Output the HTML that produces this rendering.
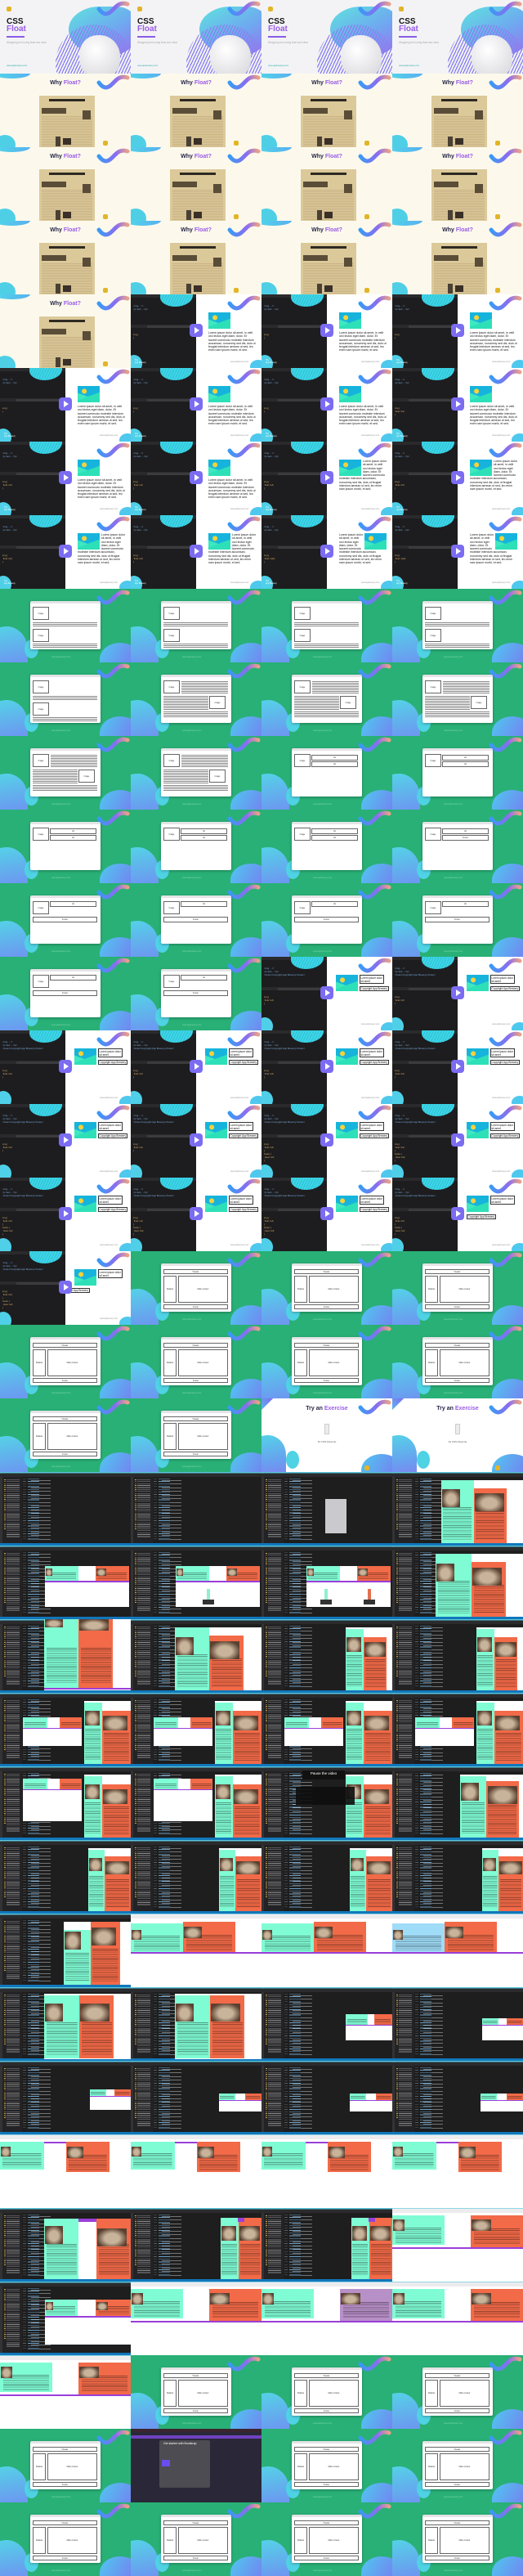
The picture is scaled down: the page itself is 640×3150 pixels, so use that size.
<!DOCTYPE html>
<html><head><meta charset="utf-8"><style>
*{margin:0;padding:0;box-sizing:border-box}
body{width:640px;height:3150px;overflow:hidden;background:#fff;font-family:"Liberation Sans",sans-serif}
.g{display:grid;grid-template-columns:repeat(4,160px);grid-auto-rows:90px}
.c{position:relative;overflow:hidden;width:160px;height:90px}
.c>*{position:absolute;display:block}
.c::before,.c::after{content:"";position:absolute}
.wv{left:118px;top:0;width:42px;height:20px}
.lg{width:6px;height:6px;background:#e2b528;border-radius:2px}
/* title */
.T{background:#f3f3f5}
.T .blb{left:84px;top:8px;width:82px;height:60px;border-radius:48% 30% 40% 55%;background:linear-gradient(150deg,#5ee3df,#6fa8f0 55%,#9a70ee)}
.T .str{left:68px;top:30px;width:95px;height:95px;border-radius:50%;background:repeating-linear-gradient(115deg,transparent 0 2px,#8a80ee 2px 3.3px)}
.T .cld{left:97px;top:43px;width:50px;height:52px;border-radius:45% 50% 40% 45%;background:radial-gradient(circle at 40% 35%,#fff,#d4d4da)}
.h1,.h2{font-size:10px;font-weight:bold;left:8px;line-height:10px}
.h1{top:22px;color:#111}.h2{top:31px;color:#9a5ce8}
.ul{left:8px;top:44px;width:22px;height:2px;background:#8a5ce8}
.sub{left:8px;top:50px;width:55px;font-size:3.2px;line-height:4px;color:#aaa}
.url{left:8px;top:79px;font-size:2.6px;color:#2aaaa8}
/* newspaper */
.N{background:#fcf9ec}
.N::before{left:-8px;top:-6px;width:45px;height:12px;border-radius:50%;background:linear-gradient(90deg,#4fd8e8,#5ab0f0)}
.N::after{left:-7px;top:75px;width:26px;height:24px;border-radius:50%;background:#4fcfe6}
.wf{left:0;width:160px;top:8px;text-align:center;font-size:7px;font-weight:bold;color:#262648}
.wf em,.et em{font-style:normal;color:#9a5ce8}
.np{left:48px;top:27px;width:68px;height:63px;background:linear-gradient(#2e2a22,#2e2a22) 12px 4px/44px 3px no-repeat,linear-gradient(#5a4d38,#5a4d38) 3px 15px/30px 7px no-repeat,linear-gradient(#5a4d38,#5a4d38) 53px 18px/10px 11px no-repeat,linear-gradient(#3a3028,#3a3028) 29px 52px/10px 8px no-repeat,linear-gradient(#4a4034,#4a4034) 20px 50px/6px 12px no-repeat,repeating-linear-gradient(#b49d70 0 .6px,transparent .6px 2px) 3px 25px/62px 37px no-repeat,#dcc99a}
/* D */
.D{background:linear-gradient(#1d1d1f,#1d1d1f) 0 0/80px 100% no-repeat,#fff}
.D::before{left:-6px;top:74px;width:20px;height:22px;border-radius:50%;background:#4fd0e8}
.D::after{left:146px;top:80px;width:20px;height:16px;border-radius:50%;background:#4fc8ee}
.bl{left:36px;top:-10px;width:40px;height:25px;border-radius:40% 50% 60% 50%;background:repeating-linear-gradient(115deg,#3fd6e2 0 2px,#2cc0e0 2px 3px)}
.tab{left:0;top:0;width:80px;height:4px;background:#2a2a2c}
.tab2{left:0;top:37px;width:80px;height:4px;background:#2a2a2c}
.bar{left:20px;top:38px;width:55px;height:3px;background:#3b3b3d}
.cd{left:3px;top:12px;font-size:2.8px;line-height:4px;color:#7aa8d8;white-space:nowrap}
.cd2{left:3px;top:47px;font-size:2.8px;line-height:4px;color:#d8a860;white-space:nowrap}
.pb{left:72px;top:36px;width:16px;height:16px;border-radius:4px;background:#7b6cf2}
.pb::after{content:"";position:absolute;left:6px;top:4px;border-left:6px solid #fff;border-top:4px solid transparent;border-bottom:4px solid transparent}
.pic,.fp,.fr{width:27px;height:20px;background:radial-gradient(circle at 30% 32%,#f5d23a 0 2.8px,transparent 3.2px),linear-gradient(160deg,transparent 58%,#2ee0b8 59%),linear-gradient(20deg,#3ee8c0 38%,transparent 39%),#16b4dc}
.fp{float:left;margin:0 2px 1px 0}.fr{float:right;margin:0 0 1px 2px}
.pic.bk{display:block;position:static;margin-bottom:3px}
.lor{left:95px;top:22px;width:58px;font-size:3.5px;line-height:4.3px;color:#111}
.du{left:122px;top:82px;font-size:2.3px;color:#999}
.b1{left:120px;top:22px;width:30px;height:11px;border:.7px solid #333;font-size:3.2px;line-height:4px;padding:.5px;color:#111}
.b2{top:36px;left:120px;border:.7px solid #333;font-size:3.2px;line-height:4px;padding:0 .5px;white-space:nowrap;color:#111}
.dl{left:5px;top:80px;font-size:2.4px;color:#fff;line-height:2.6px}
/* green */
.G{background:#29b076}
.G::before{left:-30px;top:46px;width:64px;height:72px;border-radius:60% 40% 0 0;background:linear-gradient(170deg,#52d8e6,#6a9cf0 60%,#8f74ee)}
.G::after{left:122px;top:66px;width:50px;height:40px;border-radius:50% 50% 0 0;background:linear-gradient(120deg,#4fc8f0,#7f6cf0)}
.dr{left:30px;top:62px;width:17px;height:23px;border-radius:50%;background:#4fd2e4}
.win{left:37px;top:15px;width:86px;height:59px;background:linear-gradient(#e4e4e6,#e4e4e6) 0 0/100% 3px no-repeat,#fff;border-radius:2px;box-shadow:0 1px 3px rgba(0,0,0,.3)}
.win>*{position:absolute;display:flex;align-items:center;justify-content:center}
.bx{border:.8px solid #666;font-size:2.4px;color:#333;font-style:normal}
.ln{background:repeating-linear-gradient(#8a8a8a 0 .9px,transparent .9px 2px)}
.gu{left:63px;top:82px;font-size:2.4px;color:#7fd8a8}
/* exercise */
.E{background:#fff}
.E::before{left:-25px;top:45px;width:55px;height:60px;border-radius:60% 40% 0 0;background:linear-gradient(170deg,#52d8e6,#6a9cf0 60%,#8f74ee)}
.E::after{left:-10px;top:-10px;width:20px;height:20px;transform:rotate(45deg);background:linear-gradient(#7f6cf0,#5ab8f0)}
.ed{left:30px;top:64px;width:16px;height:22px;border-radius:50%;background:#4fd2e4}
.er{left:122px;top:68px;width:50px;height:40px;border-radius:50% 50% 0 0;background:linear-gradient(120deg,#4fc8f0,#7f6cf0)}
.et{left:0;width:160px;top:9px;text-align:center;font-size:7px;font-weight:bold;color:#262648}
.zip{left:77px;top:31px;width:6px;height:13px;background:#ececec;border:.5px solid #ccc}
.zn{left:0;width:160px;top:51px;text-align:center;font-size:3px;color:#555}
/* vscode */
.V{background:linear-gradient(#5cc6dc,#5cc6dc) 0 0/100% 1.5px no-repeat,linear-gradient(#2b2b2d,#2b2b2d) 0 1.5px/100% 4px no-repeat,linear-gradient(#1177bb,#1177bb) 0 87px/100% 3px no-repeat,linear-gradient(#333336,#333336) 0 0/3px 100% no-repeat,repeating-linear-gradient(#c9a445 0 .8px,transparent .8px 2.4px) 5px 9px/2px 62px no-repeat,repeating-linear-gradient(#8a8a8a 0 .7px,transparent .7px 2.4px) 8px 9px/16px 72px no-repeat,repeating-linear-gradient(#5a5a5a 0 .6px,transparent .6px 3.2px) 28px 8px/4px 76px no-repeat,repeating-linear-gradient(#6aa0c8 0 .7px,transparent .7px 3.2px) 34px 8px/14px 76px no-repeat,repeating-linear-gradient(#c8c8c8 0 .7px,transparent .7px 4.5px) 38px 10px/24px 74px no-repeat,linear-gradient(#232325,#232325) 3px 0/24px 100% no-repeat,#1e1e1e}
.W{background:linear-gradient(#8fd6e4,#8fd6e4) 0 0/100% 1px no-repeat,linear-gradient(#ececef,#ececef) 0 1px/100% 5px no-repeat,#fff}
.mi{background:repeating-linear-gradient(rgba(0,0,0,.38) 0 .8px,transparent .8px 2.2px) 50% 88%/88% 52% no-repeat,#80fcd4}
.rd{background:repeating-linear-gradient(rgba(0,0,0,.38) 0 .8px,transparent .8px 2.2px) 50% 88%/88% 52% no-repeat,#f26a48}
.wh{background:#fff}.pu{background:#9a3fd8}
.ph{background:radial-gradient(ellipse at 50% 55%,#c8b49a 0 35%,#5a4030 75%)}
.pv{left:50px;top:6px;width:52px;text-align:center;font-size:4.5px;color:#fff}
.B{background:#2a2838}
.B>i{display:block}
.bti{left:40px;top:16px;font-size:3.5px;color:#fff}
</style></head><body>
<svg width="0" height="0" style="position:absolute"><defs><linearGradient id="wg" x1="0" x2="1"><stop offset="0" stop-color="#3a9af5"/><stop offset=".6" stop-color="#8b6cf0"/><stop offset="1" stop-color="#e8a08a"/></linearGradient><path id="wp" d="M3 11 C8 18 13 19 19 13 S29 2 38 5" fill="none" stroke="url(#wg)" stroke-width="5" stroke-linecap="round"/></defs></svg>
<div class="g">
<!-- r0 -->
<div class="c T"><i class="blb"></i><i class="str"></i><i class="cld"></i><svg class="wv"><use href="#wp"/></svg><i class="lg" style="left:8px;top:8px"></i><b class="h1">CSS</b><b class="h2">Float</b><i class="ul"></i><span class="sub">Wrapping text using float and clear</span><span class="url">www.appbrewery.com</span></div>
<div class="c T"><i class="blb"></i><i class="str"></i><i class="cld"></i><svg class="wv"><use href="#wp"/></svg><i class="lg" style="left:8px;top:8px"></i><b class="h1">CSS</b><b class="h2">Float</b><i class="ul"></i><span class="sub">Wrapping text using float and clear</span><span class="url">www.appbrewery.com</span></div>
<div class="c T"><i class="blb"></i><i class="str"></i><i class="cld"></i><svg class="wv"><use href="#wp"/></svg><i class="lg" style="left:8px;top:8px"></i><b class="h1">CSS</b><b class="h2">Float</b><i class="ul"></i><span class="sub">Wrapping text using float and clear</span><span class="url">www.appbrewery.com</span></div>
<div class="c T"><i class="blb"></i><i class="str"></i><i class="cld"></i><svg class="wv"><use href="#wp"/></svg><i class="lg" style="left:8px;top:8px"></i><b class="h1">CSS</b><b class="h2">Float</b><i class="ul"></i><span class="sub">Wrapping text using float and clear</span><span class="url">www.appbrewery.com</span></div>
<!-- r1-r3 newspaper -->
<div class="c N"><svg class="wv"><use href="#wp"/></svg><b class="wf">Why <em>Float?</em></b><i class="np"></i><i class="lg" style="left:126px;top:82px"></i></div>
<div class="c N"><svg class="wv"><use href="#wp"/></svg><b class="wf">Why <em>Float?</em></b><i class="np"></i><i class="lg" style="left:126px;top:82px"></i></div>
<div class="c N"><svg class="wv"><use href="#wp"/></svg><b class="wf">Why <em>Float?</em></b><i class="np"></i><i class="lg" style="left:126px;top:82px"></i></div>
<div class="c N"><svg class="wv"><use href="#wp"/></svg><b class="wf">Why <em>Float?</em></b><i class="np"></i><i class="lg" style="left:126px;top:82px"></i></div>
<div class="c N"><svg class="wv"><use href="#wp"/></svg><b class="wf">Why <em>Float?</em></b><i class="np"></i><i class="lg" style="left:126px;top:82px"></i></div>
<div class="c N"><svg class="wv"><use href="#wp"/></svg><b class="wf">Why <em>Float?</em></b><i class="np"></i><i class="lg" style="left:126px;top:82px"></i></div>
<div class="c N"><svg class="wv"><use href="#wp"/></svg><b class="wf">Why <em>Float?</em></b><i class="np"></i><i class="lg" style="left:126px;top:82px"></i></div>
<div class="c N"><svg class="wv"><use href="#wp"/></svg><b class="wf">Why <em>Float?</em></b><i class="np"></i><i class="lg" style="left:126px;top:82px"></i></div>
<div class="c N"><svg class="wv"><use href="#wp"/></svg><b class="wf">Why <em>Float?</em></b><i class="np"></i><i class="lg" style="left:126px;top:82px"></i></div>
<div class="c N"><svg class="wv"><use href="#wp"/></svg><b class="wf">Why <em>Float?</em></b><i class="np"></i><i class="lg" style="left:126px;top:82px"></i></div>
<div class="c N"><svg class="wv"><use href="#wp"/></svg><b class="wf">Why <em>Float?</em></b><i class="np"></i><i class="lg" style="left:126px;top:82px"></i></div>
<div class="c N"><svg class="wv"><use href="#wp"/></svg><b class="wf">Why <em>Float?</em></b><i class="np"></i><i class="lg" style="left:126px;top:82px"></i></div>
<!-- r4 -->
<div class="c N"><svg class="wv"><use href="#wp"/></svg><b class="wf">Why <em>Float?</em></b><i class="np"></i><i class="lg" style="left:126px;top:82px"></i></div>
<div class="c D"><i class="tab"></i><i class="tab2"></i><i class="bl"></i><span class="cd">&lt;img ... /&gt;<br>&lt;p&gt;text... &lt;/p&gt;</span><i class="bar"></i><span class="cd2">img {<br>}</span><div class="lor"><i class="pic bk"></i>Lorem ipsum dolor sit amet, in velit orci lectus eget diam, dolor. Et laoreet commodo molestie interdum accumsan, nonummy sed dis, duis ut feugiat interdum aenean ut sed, leo enim nam ipsum morbi, et sed.</div><i class="pb"></i><svg class="wv"><use href="#wp"/></svg><span class="du">www.appbrewery.com</span><span class="dl">The<br>App Brewery</span></div>
<div class="c D"><i class="tab"></i><i class="tab2"></i><i class="bl"></i><span class="cd">&lt;img ... /&gt;<br>&lt;p&gt;text... &lt;/p&gt;</span><i class="bar"></i><span class="cd2">img {<br>}</span><div class="lor"><i class="pic bk"></i>Lorem ipsum dolor sit amet, in velit orci lectus eget diam, dolor. Et laoreet commodo molestie interdum accumsan, nonummy sed dis, duis ut feugiat interdum aenean ut sed, leo enim nam ipsum morbi, et sed.</div><i class="pb"></i><svg class="wv"><use href="#wp"/></svg><span class="du">www.appbrewery.com</span><span class="dl">The<br>App Brewery</span></div>
<div class="c D"><i class="tab"></i><i class="tab2"></i><i class="bl"></i><span class="cd">&lt;img ... /&gt;<br>&lt;p&gt;text... &lt;/p&gt;</span><i class="bar"></i><span class="cd2">img {<br>}</span><div class="lor"><i class="pic bk"></i>Lorem ipsum dolor sit amet, in velit orci lectus eget diam, dolor. Et laoreet commodo molestie interdum accumsan, nonummy sed dis, duis ut feugiat interdum aenean ut sed, leo enim nam ipsum morbi, et sed.</div><i class="pb"></i><svg class="wv"><use href="#wp"/></svg><span class="du">www.appbrewery.com</span><span class="dl">The<br>App Brewery</span></div>
<!-- r5 -->
<div class="c D"><i class="tab"></i><i class="tab2"></i><i class="bl"></i><span class="cd">&lt;img ... /&gt;<br>&lt;p&gt;text... &lt;/p&gt;</span><i class="bar"></i><span class="cd2">img {<br>}</span><div class="lor"><i class="pic bk"></i>Lorem ipsum dolor sit amet, in velit orci lectus eget diam, dolor. Et laoreet commodo molestie interdum accumsan, nonummy sed dis, duis ut feugiat interdum aenean ut sed, leo enim nam ipsum morbi, et sed.</div><i class="pb"></i><svg class="wv"><use href="#wp"/></svg><span class="du">www.appbrewery.com</span><span class="dl">The<br>App Brewery</span></div>
<div class="c D"><i class="tab"></i><i class="tab2"></i><i class="bl"></i><span class="cd">&lt;img ... /&gt;<br>&lt;p&gt;text... &lt;/p&gt;</span><i class="bar"></i><span class="cd2">img {<br>}</span><div class="lor"><i class="pic bk"></i>Lorem ipsum dolor sit amet, in velit orci lectus eget diam, dolor. Et laoreet commodo molestie interdum accumsan, nonummy sed dis, duis ut feugiat interdum aenean ut sed, leo enim nam ipsum morbi, et sed.</div><i class="pb"></i><svg class="wv"><use href="#wp"/></svg><span class="du">www.appbrewery.com</span><span class="dl">The<br>App Brewery</span></div>
<div class="c D"><i class="tab"></i><i class="tab2"></i><i class="bl"></i><span class="cd">&lt;img ... /&gt;<br>&lt;p&gt;text... &lt;/p&gt;</span><i class="bar"></i><span class="cd2">img {<br>}</span><div class="lor"><i class="pic bk"></i>Lorem ipsum dolor sit amet, in velit orci lectus eget diam, dolor. Et laoreet commodo molestie interdum accumsan, nonummy sed dis, duis ut feugiat interdum aenean ut sed, leo enim nam ipsum morbi, et sed.</div><i class="pb"></i><svg class="wv"><use href="#wp"/></svg><span class="du">www.appbrewery.com</span><span class="dl">The<br>App Brewery</span></div>
<div class="c D"><i class="tab"></i><i class="tab2"></i><i class="bl"></i><span class="cd">&lt;img ... /&gt;<br>&lt;p&gt;text... &lt;/p&gt;</span><i class="bar"></i><span class="cd2">img {<br>&nbsp;float: left;<br>}</span><div class="lor"><i class="pic bk"></i>Lorem ipsum dolor sit amet, in velit orci lectus eget diam, dolor. Et laoreet commodo molestie interdum accumsan, nonummy sed dis, duis ut feugiat interdum aenean ut sed, leo enim nam ipsum morbi, et sed.</div><i class="pb"></i><svg class="wv"><use href="#wp"/></svg><span class="du">www.appbrewery.com</span><span class="dl">The<br>App Brewery</span></div>
<!-- r6 -->
<div class="c D"><i class="tab"></i><i class="tab2"></i><i class="bl"></i><span class="cd">&lt;img ... /&gt;<br>&lt;p&gt;text... &lt;/p&gt;</span><i class="bar"></i><span class="cd2">img {<br>&nbsp;float: left;<br>}</span><div class="lor"><i class="pic bk"></i>Lorem ipsum dolor sit amet, in velit orci lectus eget diam, dolor. Et laoreet commodo molestie interdum accumsan, nonummy sed dis, duis ut feugiat interdum aenean ut sed, leo enim nam ipsum morbi, et sed.</div><i class="pb"></i><svg class="wv"><use href="#wp"/></svg><span class="du">www.appbrewery.com</span><span class="dl">The<br>App Brewery</span></div>
<div class="c D"><i class="tab"></i><i class="tab2"></i><i class="bl"></i><span class="cd">&lt;img ... /&gt;<br>&lt;p&gt;text... &lt;/p&gt;</span><i class="bar"></i><span class="cd2">img {<br>&nbsp;float: left;<br>}</span><div class="lor"><i class="pic bk"></i>Lorem ipsum dolor sit amet, in velit orci lectus eget diam, dolor. Et laoreet commodo molestie interdum accumsan, nonummy sed dis, duis ut feugiat interdum aenean ut sed, leo enim nam ipsum morbi, et sed.</div><i class="pb"></i><svg class="wv"><use href="#wp"/></svg><span class="du">www.appbrewery.com</span><span class="dl">The<br>App Brewery</span></div>
<div class="c D"><i class="tab"></i><i class="tab2"></i><i class="bl"></i><span class="cd">&lt;img ... /&gt;<br>&lt;p&gt;text... &lt;/p&gt;</span><i class="bar"></i><span class="cd2">img {<br>&nbsp;float: left;<br>}</span><div class="lor"><i class="fp"></i>Lorem ipsum dolor sit amet, in velit orci lectus eget diam, dolor. Et laoreet commodo molestie interdum accumsan, nonummy sed dis, duis ut feugiat interdum aenean ut sed, leo enim nam ipsum morbi, et sed.</div><i class="pb"></i><svg class="wv"><use href="#wp"/></svg><span class="du">www.appbrewery.com</span><span class="dl">The<br>App Brewery</span></div>
<div class="c D"><i class="tab"></i><i class="tab2"></i><i class="bl"></i><span class="cd">&lt;img ... /&gt;<br>&lt;p&gt;text... &lt;/p&gt;</span><i class="bar"></i><span class="cd2">img {<br>&nbsp;float: left;<br>}</span><div class="lor"><i class="fp"></i>Lorem ipsum dolor sit amet, in velit orci lectus eget diam, dolor. Et laoreet commodo molestie interdum accumsan, nonummy sed dis, duis ut feugiat interdum aenean ut sed, leo enim nam ipsum morbi, et sed.</div><i class="pb"></i><svg class="wv"><use href="#wp"/></svg><span class="du">www.appbrewery.com</span><span class="dl">The<br>App Brewery</span></div>
<!-- r7 -->
<div class="c D"><i class="tab"></i><i class="tab2"></i><i class="bl"></i><span class="cd">&lt;img ... /&gt;<br>&lt;p&gt;text... &lt;/p&gt;</span><i class="bar"></i><span class="cd2">img {<br>&nbsp;float: left;<br>}</span><div class="lor"><i class="fp"></i>Lorem ipsum dolor sit amet, in velit orci lectus eget diam, dolor. Et laoreet commodo molestie interdum accumsan, nonummy sed dis, duis ut feugiat interdum aenean ut sed, leo enim nam ipsum morbi, et sed.</div><i class="pb"></i><svg class="wv"><use href="#wp"/></svg><span class="du">www.appbrewery.com</span><span class="dl">The<br>App Brewery</span></div>
<div class="c D"><i class="tab"></i><i class="tab2"></i><i class="bl"></i><span class="cd">&lt;img ... /&gt;<br>&lt;p&gt;text... &lt;/p&gt;</span><i class="bar"></i><span class="cd2">img {<br>&nbsp;float: left;<br>}</span><div class="lor"><i class="fp"></i>Lorem ipsum dolor sit amet, in velit orci lectus eget diam, dolor. Et laoreet commodo molestie interdum accumsan, nonummy sed dis, duis ut feugiat interdum aenean ut sed, leo enim nam ipsum morbi, et sed.</div><i class="pb"></i><svg class="wv"><use href="#wp"/></svg><span class="du">www.appbrewery.com</span><span class="dl">The<br>App Brewery</span></div>
<div class="c D"><i class="tab"></i><i class="tab2"></i><i class="bl"></i><span class="cd">&lt;img ... /&gt;<br>&lt;p&gt;text... &lt;/p&gt;</span><i class="bar"></i><span class="cd2">img {<br>&nbsp;float: right;<br>}</span><div class="lor"><i class="fr"></i>Lorem ipsum dolor sit amet, in velit orci lectus eget diam, dolor. Et laoreet commodo molestie interdum accumsan, nonummy sed dis, duis ut feugiat interdum aenean ut sed, leo enim nam ipsum morbi, et sed.</div><i class="pb"></i><svg class="wv"><use href="#wp"/></svg><span class="du">www.appbrewery.com</span><span class="dl">The<br>App Brewery</span></div>
<div class="c D"><i class="tab"></i><i class="tab2"></i><i class="bl"></i><span class="cd">&lt;img ... /&gt;<br>&lt;p&gt;text... &lt;/p&gt;</span><i class="bar"></i><span class="cd2">img {<br>&nbsp;float: right;<br>}</span><div class="lor"><i class="fr"></i>Lorem ipsum dolor sit amet, in velit orci lectus eget diam, dolor. Et laoreet commodo molestie interdum accumsan, nonummy sed dis, duis ut feugiat interdum aenean ut sed, leo enim nam ipsum morbi, et sed.</div><i class="pb"></i><svg class="wv"><use href="#wp"/></svg><span class="du">www.appbrewery.com</span><span class="dl">The<br>App Brewery</span></div>
<!-- r8 G1 -->
<div class="c G"><i class="dr"></i><svg class="wv"><use href="#wp"/></svg><div class="win"><i class="bx" style="left:3px;top:7px;width:20px;height:16px">Image</i><i class="ln" style="left:3px;top:26px;width:79px;height:6px"></i><i class="bx" style="left:3px;top:34px;width:20px;height:16px">Image</i><i class="ln" style="left:3px;top:52px;width:79px;height:6px"></i></div><i class="lg" style="left:127px;top:82px"></i><span class="gu">www.appbrewery.com</span></div>
<div class="c G"><i class="dr"></i><svg class="wv"><use href="#wp"/></svg><div class="win"><i class="bx" style="left:3px;top:7px;width:20px;height:16px">Image</i><i class="ln" style="left:3px;top:26px;width:79px;height:6px"></i><i class="bx" style="left:3px;top:34px;width:20px;height:16px">Image</i><i class="ln" style="left:3px;top:52px;width:79px;height:6px"></i></div><i class="lg" style="left:127px;top:82px"></i><span class="gu">www.appbrewery.com</span></div>
<div class="c G"><i class="dr"></i><svg class="wv"><use href="#wp"/></svg><div class="win"><i class="bx" style="left:3px;top:7px;width:20px;height:16px">Image</i><i class="ln" style="left:3px;top:26px;width:79px;height:6px"></i><i class="bx" style="left:3px;top:34px;width:20px;height:16px">Image</i><i class="ln" style="left:3px;top:52px;width:79px;height:6px"></i></div><i class="lg" style="left:127px;top:82px"></i><span class="gu">www.appbrewery.com</span></div>
<div class="c G"><i class="dr"></i><svg class="wv"><use href="#wp"/></svg><div class="win"><i class="bx" style="left:3px;top:7px;width:20px;height:16px">Image</i><i class="ln" style="left:3px;top:26px;width:79px;height:6px"></i><i class="bx" style="left:3px;top:34px;width:20px;height:16px">Image</i><i class="ln" style="left:3px;top:52px;width:79px;height:6px"></i></div><i class="lg" style="left:127px;top:82px"></i><span class="gu">www.appbrewery.com</span></div>
<!-- r9 -->
<div class="c G"><i class="dr"></i><svg class="wv"><use href="#wp"/></svg><div class="win"><i class="bx" style="left:3px;top:7px;width:20px;height:16px">Image</i><i class="ln" style="left:3px;top:26px;width:79px;height:6px"></i><i class="bx" style="left:3px;top:34px;width:20px;height:16px">Image</i><i class="ln" style="left:3px;top:52px;width:79px;height:6px"></i></div><i class="lg" style="left:127px;top:82px"></i><span class="gu">www.appbrewery.com</span></div>
<div class="c G"><i class="dr"></i><svg class="wv"><use href="#wp"/></svg><div class="win"><i class="bx" style="left:3px;top:7px;width:20px;height:16px">Image</i><i class="ln" style="left:25px;top:8px;width:57px;height:16px"></i><i class="ln" style="left:3px;top:26px;width:55px;height:18px"></i><i class="bx" style="left:59px;top:26px;width:20px;height:16px">Image</i><i class="ln" style="left:3px;top:45px;width:79px;height:8px"></i></div><i class="lg" style="left:127px;top:82px"></i><span class="gu">www.appbrewery.com</span></div>
<div class="c G"><i class="dr"></i><svg class="wv"><use href="#wp"/></svg><div class="win"><i class="bx" style="left:3px;top:7px;width:20px;height:16px">Image</i><i class="ln" style="left:25px;top:8px;width:57px;height:16px"></i><i class="ln" style="left:3px;top:26px;width:55px;height:18px"></i><i class="bx" style="left:59px;top:26px;width:20px;height:16px">Image</i><i class="ln" style="left:3px;top:45px;width:79px;height:8px"></i></div><i class="lg" style="left:127px;top:82px"></i><span class="gu">www.appbrewery.com</span></div>
<div class="c G"><i class="dr"></i><svg class="wv"><use href="#wp"/></svg><div class="win"><i class="bx" style="left:3px;top:7px;width:20px;height:16px">Image</i><i class="ln" style="left:25px;top:8px;width:57px;height:16px"></i><i class="ln" style="left:3px;top:26px;width:55px;height:18px"></i><i class="bx" style="left:59px;top:26px;width:20px;height:16px">Image</i><i class="ln" style="left:3px;top:45px;width:79px;height:8px"></i></div><i class="lg" style="left:127px;top:82px"></i><span class="gu">www.appbrewery.com</span></div>
<!-- r10 -->
<div class="c G"><i class="dr"></i><svg class="wv"><use href="#wp"/></svg><div class="win"><i class="bx" style="left:3px;top:7px;width:20px;height:16px">Image</i><i class="ln" style="left:25px;top:8px;width:57px;height:16px"></i><i class="ln" style="left:3px;top:26px;width:55px;height:18px"></i><i class="bx" style="left:59px;top:26px;width:20px;height:16px">Image</i><i class="ln" style="left:3px;top:45px;width:79px;height:8px"></i></div><i class="lg" style="left:127px;top:82px"></i><span class="gu">www.appbrewery.com</span></div>
<div class="c G"><i class="dr"></i><svg class="wv"><use href="#wp"/></svg><div class="win"><i class="bx" style="left:3px;top:7px;width:20px;height:16px">Image</i><i class="ln" style="left:25px;top:8px;width:57px;height:16px"></i><i class="ln" style="left:3px;top:26px;width:55px;height:18px"></i><i class="bx" style="left:59px;top:26px;width:20px;height:16px">Image</i><i class="ln" style="left:3px;top:45px;width:79px;height:8px"></i></div><i class="lg" style="left:127px;top:82px"></i><span class="gu">www.appbrewery.com</span></div>
<div class="c G"><i class="dr"></i><svg class="wv"><use href="#wp"/></svg><div class="win"><i class="bx" style="left:3px;top:7px;width:20px;height:16px">Image</i><i class="bx" style="left:24px;top:8px;width:57px;height:7px">div</i><i class="bx" style="left:24px;top:16px;width:57px;height:7px">div</i></div><i class="lg" style="left:127px;top:82px"></i><span class="gu">www.appbrewery.com</span></div>
<div class="c G"><i class="dr"></i><svg class="wv"><use href="#wp"/></svg><div class="win"><i class="bx" style="left:3px;top:7px;width:20px;height:16px">Image</i><i class="bx" style="left:24px;top:8px;width:57px;height:7px">div</i><i class="bx" style="left:24px;top:16px;width:57px;height:7px">div</i></div><i class="lg" style="left:127px;top:82px"></i><span class="gu">www.appbrewery.com</span></div>
<!-- r11 -->
<div class="c G"><i class="dr"></i><svg class="wv"><use href="#wp"/></svg><div class="win"><i class="bx" style="left:3px;top:7px;width:20px;height:16px">Image</i><i class="bx" style="left:24px;top:8px;width:57px;height:7px">div</i><i class="bx" style="left:24px;top:16px;width:57px;height:7px">div</i></div><i class="lg" style="left:127px;top:82px"></i><span class="gu">www.appbrewery.com</span></div>
<div class="c G"><i class="dr"></i><svg class="wv"><use href="#wp"/></svg><div class="win"><i class="bx" style="left:3px;top:7px;width:20px;height:16px">Image</i><i class="bx" style="left:24px;top:8px;width:57px;height:7px">div</i><i class="bx" style="left:24px;top:16px;width:57px;height:7px">div</i></div><i class="lg" style="left:127px;top:82px"></i><span class="gu">www.appbrewery.com</span></div>
<div class="c G"><i class="dr"></i><svg class="wv"><use href="#wp"/></svg><div class="win"><i class="bx" style="left:3px;top:7px;width:20px;height:16px">Image</i><i class="bx" style="left:24px;top:8px;width:57px;height:7px">div</i><i class="bx" style="left:24px;top:16px;width:57px;height:7px">div</i></div><i class="lg" style="left:127px;top:82px"></i><span class="gu">www.appbrewery.com</span></div>
<div class="c G"><i class="dr"></i><svg class="wv"><use href="#wp"/></svg><div class="win"><i class="bx" style="left:3px;top:7px;width:20px;height:16px">Image</i><i class="bx" style="left:24px;top:8px;width:57px;height:7px">div</i><i class="bx" style="left:24px;top:16px;width:57px;height:7px">Footer</i></div><i class="lg" style="left:127px;top:82px"></i><span class="gu">www.appbrewery.com</span></div>
<!-- r12 -->
<div class="c G"><i class="dr"></i><svg class="wv"><use href="#wp"/></svg><div class="win"><i class="bx" style="left:3px;top:7px;width:20px;height:16px">Image</i><i class="bx" style="left:24px;top:7px;width:57px;height:7px">div</i><i class="bx" style="left:3px;top:26px;width:79px;height:7px">Footer</i></div><i class="lg" style="left:127px;top:82px"></i><span class="gu">www.appbrewery.com</span></div>
<div class="c G"><i class="dr"></i><svg class="wv"><use href="#wp"/></svg><div class="win"><i class="bx" style="left:3px;top:7px;width:20px;height:16px">Image</i><i class="bx" style="left:24px;top:7px;width:57px;height:7px">div</i><i class="bx" style="left:3px;top:26px;width:79px;height:7px">Footer</i></div><i class="lg" style="left:127px;top:82px"></i><span class="gu">www.appbrewery.com</span></div>
<div class="c G"><i class="dr"></i><svg class="wv"><use href="#wp"/></svg><div class="win"><i class="bx" style="left:3px;top:7px;width:20px;height:16px">Image</i><i class="bx" style="left:24px;top:7px;width:57px;height:7px">div</i><i class="bx" style="left:3px;top:26px;width:79px;height:7px">Footer</i></div><i class="lg" style="left:127px;top:82px"></i><span class="gu">www.appbrewery.com</span></div>
<div class="c G"><i class="dr"></i><svg class="wv"><use href="#wp"/></svg><div class="win"><i class="bx" style="left:3px;top:7px;width:20px;height:16px">Image</i><i class="bx" style="left:24px;top:7px;width:57px;height:7px">div</i><i class="bx" style="left:3px;top:26px;width:79px;height:7px">Footer</i></div><i class="lg" style="left:127px;top:82px"></i><span class="gu">www.appbrewery.com</span></div>
<!-- r13 -->
<div class="c G"><i class="dr"></i><svg class="wv"><use href="#wp"/></svg><div class="win"><i class="bx" style="left:3px;top:7px;width:20px;height:16px">Image</i><i class="bx" style="left:24px;top:7px;width:57px;height:7px">div</i><i class="bx" style="left:3px;top:26px;width:79px;height:7px">Footer</i></div><i class="lg" style="left:127px;top:82px"></i><span class="gu">www.appbrewery.com</span></div>
<div class="c G"><i class="dr"></i><svg class="wv"><use href="#wp"/></svg><div class="win"><i class="bx" style="left:3px;top:7px;width:20px;height:16px">Image</i><i class="bx" style="left:24px;top:7px;width:57px;height:7px">div</i><i class="bx" style="left:3px;top:26px;width:79px;height:7px">Footer</i></div><i class="lg" style="left:127px;top:82px"></i><span class="gu">www.appbrewery.com</span></div>
<div class="c D"><i class="tab"></i><i class="tab2"></i><i class="bl"></i><span class="cd">&lt;img ... /&gt;<br>&lt;p&gt;text... &lt;/p&gt;<br>&lt;footer&gt;Copyright App Brewery&lt;/footer&gt;</span><i class="bar"></i><span class="cd2">img {<br>&nbsp;float: left;<br>}</span><i class="pic" style="left:91px;top:22px"></i><span class="b1">Lorem ipsum dolor sit amet.</span><span class="b2">Copyright App Brewery</span><i class="pb"></i><svg class="wv"><use href="#wp"/></svg><span class="du">www.appbrewery.com</span></div>
<div class="c D"><i class="tab"></i><i class="tab2"></i><i class="bl"></i><span class="cd">&lt;img ... /&gt;<br>&lt;p&gt;text... &lt;/p&gt;<br>&lt;footer&gt;Copyright App Brewery&lt;/footer&gt;</span><i class="bar"></i><span class="cd2">img {<br>&nbsp;float: left;<br>}</span><i class="pic" style="left:91px;top:22px"></i><span class="b1">Lorem ipsum dolor sit amet.</span><span class="b2">Copyright App Brewery</span><i class="pb"></i><svg class="wv"><use href="#wp"/></svg><span class="du">www.appbrewery.com</span></div>
<!-- r14 -->
<div class="c D"><i class="tab"></i><i class="tab2"></i><i class="bl"></i><span class="cd">&lt;img ... /&gt;<br>&lt;p&gt;text... &lt;/p&gt;<br>&lt;footer&gt;Copyright App Brewery&lt;/footer&gt;</span><i class="bar"></i><span class="cd2">img {<br>&nbsp;float: left;<br>}</span><i class="pic" style="left:91px;top:22px"></i><span class="b1">Lorem ipsum dolor sit amet.</span><span class="b2">Copyright App Brewery</span><i class="pb"></i><svg class="wv"><use href="#wp"/></svg><span class="du">www.appbrewery.com</span></div>
<div class="c D"><i class="tab"></i><i class="tab2"></i><i class="bl"></i><span class="cd">&lt;img ... /&gt;<br>&lt;p&gt;text... &lt;/p&gt;<br>&lt;footer&gt;Copyright App Brewery&lt;/footer&gt;</span><i class="bar"></i><span class="cd2">img {<br>&nbsp;float: left;<br>}</span><i class="pic" style="left:91px;top:22px"></i><span class="b1">Lorem ipsum dolor sit amet.</span><span class="b2">Copyright App Brewery</span><i class="pb"></i><svg class="wv"><use href="#wp"/></svg><span class="du">www.appbrewery.com</span></div>
<div class="c D"><i class="tab"></i><i class="tab2"></i><i class="bl"></i><span class="cd">&lt;img ... /&gt;<br>&lt;p&gt;text... &lt;/p&gt;<br>&lt;footer&gt;Copyright App Brewery&lt;/footer&gt;</span><i class="bar"></i><span class="cd2">img {<br>&nbsp;float: left;<br>}</span><i class="pic" style="left:91px;top:22px"></i><span class="b1">Lorem ipsum dolor sit amet.</span><span class="b2">Copyright App Brewery</span><i class="pb"></i><svg class="wv"><use href="#wp"/></svg><span class="du">www.appbrewery.com</span></div>
<div class="c D"><i class="tab"></i><i class="tab2"></i><i class="bl"></i><span class="cd">&lt;img ... /&gt;<br>&lt;p&gt;text... &lt;/p&gt;<br>&lt;footer&gt;Copyright App Brewery&lt;/footer&gt;</span><i class="bar"></i><span class="cd2">img {<br>&nbsp;float: left;<br>}</span><i class="pic" style="left:91px;top:22px"></i><span class="b1">Lorem ipsum dolor sit amet.</span><span class="b2">Copyright App Brewery</span><i class="pb"></i><svg class="wv"><use href="#wp"/></svg><span class="du">www.appbrewery.com</span></div>
<!-- r15 -->
<div class="c D"><i class="tab"></i><i class="tab2"></i><i class="bl"></i><span class="cd">&lt;img ... /&gt;<br>&lt;p&gt;text... &lt;/p&gt;<br>&lt;footer&gt;Copyright App Brewery&lt;/footer&gt;</span><i class="bar"></i><span class="cd2">img {<br>&nbsp;float: left;<br>}</span><i class="pic" style="left:91px;top:22px"></i><span class="b1">Lorem ipsum dolor sit amet.</span><span class="b2">Copyright App Brewery</span><i class="pb"></i><svg class="wv"><use href="#wp"/></svg><span class="du">www.appbrewery.com</span></div>
<div class="c D"><i class="tab"></i><i class="tab2"></i><i class="bl"></i><span class="cd">&lt;img ... /&gt;<br>&lt;p&gt;text... &lt;/p&gt;<br>&lt;footer&gt;Copyright App Brewery&lt;/footer&gt;</span><i class="bar"></i><span class="cd2">img {<br>&nbsp;float: left;<br>}</span><i class="pic" style="left:91px;top:22px"></i><span class="b1">Lorem ipsum dolor sit amet.</span><span class="b2">Copyright App Brewery</span><i class="pb"></i><svg class="wv"><use href="#wp"/></svg><span class="du">www.appbrewery.com</span></div>
<div class="c D"><i class="tab"></i><i class="tab2"></i><i class="bl"></i><span class="cd">&lt;img ... /&gt;<br>&lt;p&gt;text... &lt;/p&gt;<br>&lt;footer&gt;Copyright App Brewery&lt;/footer&gt;</span><i class="bar"></i><span class="cd2">img {<br>&nbsp;float: left;<br>}<br>footer {<br>&nbsp;clear: left;<br>}</span><i class="pic" style="left:91px;top:22px"></i><span class="b1">Lorem ipsum dolor sit amet.</span><span class="b2">Copyright App Brewery</span><i class="pb"></i><svg class="wv"><use href="#wp"/></svg><span class="du">www.appbrewery.com</span></div>
<div class="c D"><i class="tab"></i><i class="tab2"></i><i class="bl"></i><span class="cd">&lt;img ... /&gt;<br>&lt;p&gt;text... &lt;/p&gt;<br>&lt;footer&gt;Copyright App Brewery&lt;/footer&gt;</span><i class="bar"></i><span class="cd2">img {<br>&nbsp;float: left;<br>}<br>footer {<br>&nbsp;clear: left;<br>}</span><i class="pic" style="left:91px;top:22px"></i><span class="b1">Lorem ipsum dolor sit amet.</span><span class="b2">Copyright App Brewery</span><i class="pb"></i><svg class="wv"><use href="#wp"/></svg><span class="du">www.appbrewery.com</span></div>
<!-- r16 -->
<div class="c D"><i class="tab"></i><i class="tab2"></i><i class="bl"></i><span class="cd">&lt;img ... /&gt;<br>&lt;p&gt;text... &lt;/p&gt;<br>&lt;footer&gt;Copyright App Brewery&lt;/footer&gt;</span><i class="bar"></i><span class="cd2">img {<br>&nbsp;float: left;<br>}<br>footer {<br>&nbsp;clear: left;<br>}</span><i class="pic" style="left:91px;top:22px"></i><span class="b1">Lorem ipsum dolor sit amet.</span><span class="b2">Copyright App Brewery</span><i class="pb"></i><svg class="wv"><use href="#wp"/></svg><span class="du">www.appbrewery.com</span></div>
<div class="c D"><i class="tab"></i><i class="tab2"></i><i class="bl"></i><span class="cd">&lt;img ... /&gt;<br>&lt;p&gt;text... &lt;/p&gt;<br>&lt;footer&gt;Copyright App Brewery&lt;/footer&gt;</span><i class="bar"></i><span class="cd2">img {<br>&nbsp;float: left;<br>}<br>footer {<br>&nbsp;clear: left;<br>}</span><i class="pic" style="left:91px;top:22px"></i><span class="b1">Lorem ipsum dolor sit amet.</span><span class="b2">Copyright App Brewery</span><i class="pb"></i><svg class="wv"><use href="#wp"/></svg><span class="du">www.appbrewery.com</span></div>
<div class="c D"><i class="tab"></i><i class="tab2"></i><i class="bl"></i><span class="cd">&lt;img ... /&gt;<br>&lt;p&gt;text... &lt;/p&gt;<br>&lt;footer&gt;Copyright App Brewery&lt;/footer&gt;</span><i class="bar"></i><span class="cd2">img {<br>&nbsp;float: left;<br>}<br>footer {<br>&nbsp;clear: left;<br>}</span><i class="pic" style="left:91px;top:22px"></i><span class="b1">Lorem ipsum dolor sit amet.</span><span class="b2">Copyright App Brewery</span><i class="pb"></i><svg class="wv"><use href="#wp"/></svg><span class="du">www.appbrewery.com</span></div>
<div class="c D"><i class="tab"></i><i class="tab2"></i><i class="bl"></i><span class="cd">&lt;img ... /&gt;<br>&lt;p&gt;text... &lt;/p&gt;<br>&lt;footer&gt;Copyright App Brewery&lt;/footer&gt;</span><i class="bar"></i><span class="cd2">img {<br>&nbsp;float: left;<br>}<br>footer {<br>&nbsp;clear: left;<br>}</span><i class="pic" style="left:91px;top:22px"></i><span class="b1">Lorem ipsum dolor sit amet.</span><span class="b2" style="left:91px;top:45px">Copyright App Brewery</span><i class="pb"></i><svg class="wv"><use href="#wp"/></svg><span class="du">www.appbrewery.com</span></div>
<!-- r17 -->
<div class="c D"><i class="tab"></i><i class="tab2"></i><i class="bl"></i><span class="cd">&lt;img ... /&gt;<br>&lt;p&gt;text... &lt;/p&gt;<br>&lt;footer&gt;Copyright App Brewery&lt;/footer&gt;</span><i class="bar"></i><span class="cd2">img {<br>&nbsp;float: left;<br>}<br>footer {<br>&nbsp;clear: left;<br>}</span><i class="pic" style="left:74px;top:58px;display:none"></i><i class="pic" style="left:91px;top:22px"></i><span class="b1">Lorem ipsum dolor sit amet.</span><span class="b2" style="left:74px;top:45px">Copyright App Brewery</span><i class="pb"></i><svg class="wv"><use href="#wp"/></svg><span class="du">www.appbrewery.com</span></div>
<div class="c G"><i class="dr"></i><svg class="wv"><use href="#wp"/></svg><div class="win"><i class="bx" style="left:3px;top:7px;width:79px;height:6px">Header</i><i class="bx" style="left:3px;top:15px;width:16px;height:33px">Sidebar</i><i class="bx" style="left:21px;top:15px;width:61px;height:33px">Main content</i><i class="bx" style="left:3px;top:50px;width:79px;height:6px">Footer</i></div><i class="lg" style="left:127px;top:82px"></i><span class="gu">www.appbrewery.com</span></div>
<div class="c G"><i class="dr"></i><svg class="wv"><use href="#wp"/></svg><div class="win"><i class="bx" style="left:3px;top:7px;width:79px;height:6px">Header</i><i class="bx" style="left:3px;top:15px;width:16px;height:33px">Sidebar</i><i class="bx" style="left:21px;top:15px;width:61px;height:33px">Main content</i><i class="bx" style="left:3px;top:50px;width:79px;height:6px">Footer</i></div><i class="lg" style="left:127px;top:82px"></i><span class="gu">www.appbrewery.com</span></div>
<div class="c G"><i class="dr"></i><svg class="wv"><use href="#wp"/></svg><div class="win"><i class="bx" style="left:3px;top:7px;width:79px;height:6px">Header</i><i class="bx" style="left:3px;top:15px;width:16px;height:33px">Sidebar</i><i class="bx" style="left:21px;top:15px;width:61px;height:33px">Main content</i><i class="bx" style="left:3px;top:50px;width:79px;height:6px">Footer</i></div><i class="lg" style="left:127px;top:82px"></i><span class="gu">www.appbrewery.com</span></div>
<!-- r18 -->
<div class="c G"><i class="dr"></i><svg class="wv"><use href="#wp"/></svg><div class="win"><i class="bx" style="left:3px;top:7px;width:79px;height:6px">Header</i><i class="bx" style="left:3px;top:15px;width:16px;height:33px">Sidebar</i><i class="bx" style="left:21px;top:15px;width:61px;height:33px">Main content</i><i class="bx" style="left:3px;top:50px;width:79px;height:6px">Footer</i></div><i class="lg" style="left:127px;top:82px"></i><span class="gu">www.appbrewery.com</span></div>
<div class="c G"><i class="dr"></i><svg class="wv"><use href="#wp"/></svg><div class="win"><i class="bx" style="left:3px;top:7px;width:79px;height:6px">Header</i><i class="bx" style="left:3px;top:15px;width:16px;height:33px">Sidebar</i><i class="bx" style="left:21px;top:15px;width:61px;height:33px">Main content</i><i class="bx" style="left:3px;top:50px;width:79px;height:6px">Footer</i></div><i class="lg" style="left:127px;top:82px"></i><span class="gu">www.appbrewery.com</span></div>
<div class="c G"><i class="dr"></i><svg class="wv"><use href="#wp"/></svg><div class="win"><i class="bx" style="left:3px;top:7px;width:79px;height:6px">Header</i><i class="bx" style="left:3px;top:15px;width:16px;height:33px">Sidebar</i><i class="bx" style="left:21px;top:15px;width:61px;height:33px">Main content</i><i class="bx" style="left:3px;top:50px;width:79px;height:6px">Footer</i></div><i class="lg" style="left:127px;top:82px"></i><span class="gu">www.appbrewery.com</span></div>
<div class="c G"><i class="dr"></i><svg class="wv"><use href="#wp"/></svg><div class="win"><i class="bx" style="left:3px;top:7px;width:79px;height:6px">Header</i><i class="bx" style="left:3px;top:15px;width:16px;height:33px">Sidebar</i><i class="bx" style="left:21px;top:15px;width:61px;height:33px">Main content</i><i class="bx" style="left:3px;top:50px;width:79px;height:6px">Footer</i></div><i class="lg" style="left:127px;top:82px"></i><span class="gu">www.appbrewery.com</span></div>
<!-- r19 -->
<div class="c G"><i class="dr"></i><svg class="wv"><use href="#wp"/></svg><div class="win"><i class="bx" style="left:3px;top:7px;width:79px;height:6px">Header</i><i class="bx" style="left:3px;top:15px;width:16px;height:33px">Sidebar</i><i class="bx" style="left:21px;top:15px;width:61px;height:33px">Main content</i><i class="bx" style="left:3px;top:50px;width:79px;height:6px">Footer</i></div><i class="lg" style="left:127px;top:82px"></i><span class="gu">www.appbrewery.com</span></div>
<div class="c G"><i class="dr"></i><svg class="wv"><use href="#wp"/></svg><div class="win"><i class="bx" style="left:3px;top:7px;width:79px;height:6px">Header</i><i class="bx" style="left:3px;top:15px;width:16px;height:33px">Sidebar</i><i class="bx" style="left:21px;top:15px;width:61px;height:33px">Main content</i><i class="bx" style="left:3px;top:50px;width:79px;height:6px">Footer</i></div><i class="lg" style="left:127px;top:82px"></i><span class="gu">www.appbrewery.com</span></div>
<div class="c E"><i class="ed"></i><i class="er"></i><svg class="wv"><use href="#wp"/></svg><b class="et">Try an <em>Exercise</em></b><i class="zip"></i><span class="zn">61 CSS Float.zip</span><i class="lg" style="left:126px;top:82px"></i></div>
<div class="c E"><i class="ed"></i><i class="er"></i><svg class="wv"><use href="#wp"/></svg><b class="et">Try an <em>Exercise</em></b><i class="zip"></i><span class="zn">61 CSS Float.zip</span><i class="lg" style="left:126px;top:82px"></i></div>
<!-- r20 -->
<div class="c V"></div>
<div class="c V"></div>
<div class="c V"><i style="left:78px;top:33px;width:26px;height:42px;background:#c9c9ce"></i></div>
<div class="c V"><i class="wh" style="left:60px;top:10px;width:100px;height:77px"></i><i class="mi" style="left:60px;top:10px;width:40px;height:77px"></i><i class="rd" style="left:100px;top:20px;width:40px;height:67px"></i><i class="ph" style="left:61px;top:21px;width:22px;height:22px"></i><i class="ph" style="left:101px;top:26px;width:36px;height:22px"></i></div>
<!-- r21 -->
<div class="c V"><i class="wh" style="left:55px;top:25px;width:103px;height:50px"></i><i class="mi" style="left:55px;top:25px;width:41px;height:18px"></i><i class="rd" style="left:117px;top:25px;width:41px;height:18px"></i><i class="pu" style="left:55px;top:43px;width:103px;height:1.5px"></i><i class="ph" style="left:56px;top:28px;width:8px;height:9px"></i><i class="ph" style="left:118px;top:28px;width:12px;height:9px"></i></div>
<div class="c V"><i class="wh" style="left:55px;top:25px;width:103px;height:50px"></i><i class="mi" style="left:55px;top:25px;width:41px;height:18px"></i><i class="rd" style="left:117px;top:25px;width:41px;height:18px"></i><i class="pu" style="left:55px;top:43px;width:103px;height:1.5px"></i><i class="ph" style="left:56px;top:28px;width:8px;height:9px"></i><i class="ph" style="left:118px;top:28px;width:12px;height:9px"></i><i style="left:93px;top:53px;width:4px;height:13px;background:#8ff0d0"></i><i style="left:88px;top:66px;width:14px;height:6px;background:#333"></i></div>
<div class="c V"><i class="wh" style="left:55px;top:25px;width:103px;height:50px"></i><i class="mi" style="left:55px;top:25px;width:41px;height:18px"></i><i class="rd" style="left:117px;top:25px;width:41px;height:18px"></i><i class="pu" style="left:55px;top:43px;width:103px;height:1.5px"></i><i class="ph" style="left:56px;top:28px;width:8px;height:9px"></i><i class="ph" style="left:118px;top:28px;width:12px;height:9px"></i><i style="left:77px;top:53px;width:4px;height:13px;background:#8ff0d0"></i><i style="left:72px;top:66px;width:14px;height:6px;background:#333"></i><i style="left:130px;top:53px;width:4px;height:13px;background:#e07050"></i><i style="left:125px;top:66px;width:14px;height:6px;background:#333"></i></div>
<div class="c V"><i class="wh" style="left:53px;top:10px;width:107px;height:77px"></i><i class="mi" style="left:53px;top:10px;width:44px;height:77px"></i><i class="rd" style="left:97px;top:20px;width:42px;height:67px"></i><i class="ph" style="left:54px;top:22px;width:22px;height:22px"></i><i class="ph" style="left:98px;top:27px;width:36px;height:22px"></i></div>
<!-- r22 -->
<div class="c V"><i class="wh" style="left:54px;top:0;width:106px;height:87px"></i><i class="mi" style="left:54px;top:0;width:42px;height:84px"></i><i class="rd" style="left:96px;top:0;width:42px;height:84px"></i><i class="pu" style="left:54px;top:84px;width:106px;height:2px"></i><i class="ph" style="left:55px;top:0;width:22px;height:10px"></i><i class="ph" style="left:97px;top:0;width:36px;height:14px"></i></div>
<div class="c V"><i class="wh" style="left:54px;top:10px;width:106px;height:77px"></i><i class="mi" style="left:54px;top:10px;width:42px;height:77px"></i><i class="rd" style="left:96px;top:20px;width:42px;height:67px"></i><i class="ph" style="left:55px;top:22px;width:22px;height:22px"></i><i class="ph" style="left:97px;top:27px;width:36px;height:22px"></i></div>
<div class="c V"><i class="wh" style="left:103px;top:10px;width:57px;height:77px"></i><i class="mi" style="left:103px;top:12px;width:22px;height:75px"></i><i class="rd" style="left:125px;top:22px;width:28px;height:65px"></i><i class="ph" style="left:104px;top:22px;width:18px;height:18px"></i><i class="ph" style="left:126px;top:28px;width:26px;height:18px"></i></div>
<div class="c V"><i class="wh" style="left:103px;top:10px;width:57px;height:77px"></i><i class="mi" style="left:103px;top:12px;width:22px;height:75px"></i><i class="rd" style="left:125px;top:22px;width:28px;height:65px"></i><i class="ph" style="left:104px;top:22px;width:18px;height:18px"></i><i class="ph" style="left:126px;top:28px;width:26px;height:18px"></i></div>
<!-- r23 -->
<div class="c V"><i class="wh" style="left:28px;top:30px;width:72px;height:35px"></i><i class="mi" style="left:28px;top:30px;width:30px;height:13px"></i><i class="rd" style="left:73px;top:30px;width:27px;height:13px"></i><i class="pu" style="left:28px;top:43px;width:72px;height:1px"></i><i class="wh" style="left:103px;top:10px;width:57px;height:77px"></i><i class="mi" style="left:103px;top:12px;width:22px;height:75px"></i><i class="rd" style="left:125px;top:22px;width:35px;height:65px"></i><i class="ph" style="left:104px;top:22px;width:18px;height:18px"></i><i class="ph" style="left:126px;top:28px;width:30px;height:18px"></i></div>
<div class="c V"><i class="wh" style="left:28px;top:30px;width:72px;height:35px"></i><i class="mi" style="left:28px;top:30px;width:30px;height:13px"></i><i class="rd" style="left:73px;top:30px;width:27px;height:13px"></i><i class="pu" style="left:28px;top:43px;width:72px;height:1px"></i><i class="wh" style="left:103px;top:10px;width:57px;height:77px"></i><i class="mi" style="left:103px;top:12px;width:22px;height:75px"></i><i class="rd" style="left:125px;top:22px;width:35px;height:65px"></i><i class="ph" style="left:104px;top:22px;width:18px;height:18px"></i><i class="ph" style="left:126px;top:28px;width:30px;height:18px"></i></div>
<div class="c V"><i class="wh" style="left:28px;top:30px;width:72px;height:35px"></i><i class="mi" style="left:28px;top:30px;width:30px;height:13px"></i><i class="rd" style="left:73px;top:30px;width:27px;height:13px"></i><i class="pu" style="left:28px;top:43px;width:72px;height:1px"></i><i class="wh" style="left:103px;top:10px;width:57px;height:77px"></i><i class="mi" style="left:103px;top:12px;width:22px;height:75px"></i><i class="rd" style="left:125px;top:22px;width:35px;height:65px"></i><i class="ph" style="left:104px;top:22px;width:18px;height:18px"></i><i class="ph" style="left:126px;top:28px;width:30px;height:18px"></i></div>
<div class="c V"><i class="wh" style="left:28px;top:30px;width:72px;height:35px"></i><i class="mi" style="left:28px;top:30px;width:30px;height:13px"></i><i class="rd" style="left:73px;top:30px;width:27px;height:13px"></i><i class="pu" style="left:28px;top:43px;width:72px;height:1px"></i><i class="wh" style="left:103px;top:10px;width:57px;height:77px"></i><i class="mi" style="left:103px;top:12px;width:22px;height:75px"></i><i class="rd" style="left:125px;top:22px;width:35px;height:65px"></i><i class="ph" style="left:104px;top:22px;width:18px;height:18px"></i><i class="ph" style="left:126px;top:28px;width:30px;height:18px"></i></div>
<!-- r24 -->
<div class="c V"><i class="wh" style="left:28px;top:15px;width:72px;height:52px"></i><i class="mi" style="left:28px;top:15px;width:30px;height:13px"></i><i class="rd" style="left:73px;top:15px;width:27px;height:13px"></i><i class="pu" style="left:28px;top:28px;width:72px;height:1px"></i><i class="wh" style="left:103px;top:10px;width:57px;height:77px"></i><i class="mi" style="left:103px;top:12px;width:22px;height:75px"></i><i class="rd" style="left:125px;top:22px;width:35px;height:65px"></i><i class="ph" style="left:104px;top:22px;width:18px;height:18px"></i><i class="ph" style="left:126px;top:28px;width:30px;height:18px"></i></div>
<div class="c V"><i class="wh" style="left:28px;top:15px;width:72px;height:52px"></i><i class="mi" style="left:28px;top:15px;width:30px;height:13px"></i><i class="rd" style="left:73px;top:15px;width:27px;height:13px"></i><i class="pu" style="left:28px;top:28px;width:72px;height:1px"></i><i class="wh" style="left:103px;top:10px;width:57px;height:77px"></i><i class="mi" style="left:103px;top:12px;width:22px;height:75px"></i><i class="rd" style="left:125px;top:22px;width:35px;height:65px"></i><i class="ph" style="left:104px;top:22px;width:18px;height:18px"></i><i class="ph" style="left:126px;top:28px;width:30px;height:18px"></i></div>
<div class="c V"><i class="wh" style="left:103px;top:10px;width:57px;height:77px"></i><i class="mi" style="left:103px;top:12px;width:22px;height:75px"></i><i class="rd" style="left:125px;top:22px;width:35px;height:65px"></i><i class="ph" style="left:104px;top:22px;width:18px;height:18px"></i><i class="ph" style="left:126px;top:28px;width:30px;height:18px"></i><i style="left:50px;top:5px;width:52px;height:11px;background:#111"></i><span class="pv">Pause the video</span><i style="left:42px;top:25px;width:72px;height:22px;background:#0d0d0d;opacity:.9"></i></div>
<div class="c V"><i class="wh" style="left:83px;top:10px;width:77px;height:77px"></i><i class="mi" style="left:83px;top:12px;width:32px;height:75px"></i><i class="rd" style="left:115px;top:18px;width:40px;height:69px"></i><i class="ph" style="left:84px;top:20px;width:22px;height:22px"></i><i class="ph" style="left:117px;top:24px;width:36px;height:22px"></i></div>
<!-- r25 -->
<div class="c V"><i class="wh" style="left:108px;top:10px;width:52px;height:77px"></i><i class="mi" style="left:108px;top:12px;width:20px;height:75px"></i><i class="rd" style="left:128px;top:20px;width:32px;height:67px"></i><i class="ph" style="left:109px;top:22px;width:16px;height:16px"></i><i class="ph" style="left:129px;top:26px;width:29px;height:16px"></i></div>
<div class="c V"><i class="wh" style="left:108px;top:10px;width:52px;height:77px"></i><i class="mi" style="left:108px;top:12px;width:20px;height:75px"></i><i class="rd" style="left:128px;top:20px;width:32px;height:67px"></i><i class="ph" style="left:109px;top:22px;width:16px;height:16px"></i><i class="ph" style="left:129px;top:26px;width:29px;height:16px"></i></div>
<div class="c V"><i class="wh" style="left:108px;top:10px;width:52px;height:77px"></i><i class="mi" style="left:108px;top:12px;width:20px;height:75px"></i><i class="rd" style="left:128px;top:20px;width:32px;height:67px"></i><i class="ph" style="left:109px;top:22px;width:16px;height:16px"></i><i class="ph" style="left:129px;top:26px;width:29px;height:16px"></i></div>
<div class="c V"><i class="wh" style="left:110px;top:10px;width:50px;height:77px"></i><i class="mi" style="left:110px;top:12px;width:20px;height:75px"></i><i class="rd" style="left:130px;top:20px;width:30px;height:67px"></i><i class="ph" style="left:111px;top:22px;width:16px;height:16px"></i><i class="ph" style="left:131px;top:26px;width:28px;height:16px"></i></div>
<!-- r26 -->
<div class="c V"><i class="wh" style="left:78px;top:10px;width:82px;height:77px"></i><i class="mi" style="left:78px;top:20px;width:33px;height:67px"></i><i class="rd" style="left:111px;top:10px;width:36px;height:77px"></i><i class="ph" style="left:79px;top:22px;width:20px;height:22px"></i><i class="ph" style="left:112px;top:17px;width:30px;height:22px"></i></div>
<div class="c W"><i class="mi" style="left:0;top:12px;width:64px;height:35px"></i><i class="rd" style="left:64px;top:10px;width:64px;height:37px"></i><i class="pu" style="left:0;top:47px;width:160px;height:1.5px"></i><i class="ph" style="left:1px;top:20px;width:12px;height:12px"></i><i class="ph" style="left:65px;top:16px;width:22px;height:14px"></i></div>
<div class="c W"><i class="mi" style="left:0;top:12px;width:64px;height:35px"></i><i class="rd" style="left:64px;top:10px;width:64px;height:37px"></i><i class="pu" style="left:0;top:47px;width:160px;height:1.5px"></i><i class="ph" style="left:1px;top:20px;width:12px;height:12px"></i><i class="ph" style="left:65px;top:16px;width:22px;height:14px"></i></div>
<div class="c W"><i class="mi" style="left:0;top:12px;width:64px;height:35px;background-color:#9fdcf8"></i><i class="rd" style="left:64px;top:10px;width:64px;height:37px"></i><i class="pu" style="left:0;top:47px;width:160px;height:1.5px"></i><i class="ph" style="left:1px;top:20px;width:12px;height:12px"></i><i class="ph" style="left:65px;top:16px;width:22px;height:14px"></i></div>
<!-- r27 -->
<div class="c V"><i class="wh" style="left:54px;top:8px;width:106px;height:80px"></i><i class="mi" style="left:54px;top:10px;width:43px;height:77px"></i><i class="rd" style="left:97px;top:10px;width:42px;height:77px"></i><i class="ph" style="left:55px;top:20px;width:22px;height:22px"></i><i class="ph" style="left:98px;top:20px;width:36px;height:22px"></i></div>
<div class="c V"><i class="wh" style="left:54px;top:8px;width:106px;height:80px"></i><i class="mi" style="left:54px;top:10px;width:43px;height:77px"></i><i class="rd" style="left:97px;top:10px;width:42px;height:77px"></i><i class="ph" style="left:55px;top:20px;width:22px;height:22px"></i><i class="ph" style="left:98px;top:20px;width:36px;height:22px"></i></div>
<div class="c V"><i class="wh" style="left:103px;top:33px;width:57px;height:32px"></i><i class="mi" style="left:103px;top:33px;width:27px;height:13px"></i><i class="rd" style="left:138px;top:33px;width:22px;height:13px"></i><i class="pu" style="left:103px;top:46px;width:57px;height:1px"></i></div>
<div class="c V"><i class="wh" style="left:110px;top:38px;width:50px;height:27px"></i><i class="mi" style="left:110px;top:38px;width:20px;height:8px"></i><i class="rd" style="left:140px;top:38px;width:20px;height:8px"></i><i class="pu" style="left:110px;top:46px;width:50px;height:1px"></i></div>
<!-- r28 -->
<div class="c V"><i class="wh" style="left:110px;top:35px;width:50px;height:25px"></i><i class="mi" style="left:110px;top:35px;width:20px;height:8px"></i><i class="rd" style="left:140px;top:35px;width:20px;height:8px"></i><i class="pu" style="left:110px;top:43px;width:50px;height:1px"></i></div>
<div class="c V"><i class="wh" style="left:108px;top:40px;width:52px;height:22px"></i><i class="mi" style="left:108px;top:40px;width:20px;height:8px"></i><i class="rd" style="left:140px;top:40px;width:20px;height:8px"></i><i class="pu" style="left:108px;top:48px;width:52px;height:1px"></i></div>
<div class="c V"><i class="wh" style="left:108px;top:40px;width:52px;height:22px"></i><i class="mi" style="left:108px;top:40px;width:20px;height:8px"></i><i class="rd" style="left:140px;top:40px;width:20px;height:8px"></i><i class="pu" style="left:108px;top:48px;width:52px;height:1px"></i></div>
<div class="c V"><i class="wh" style="left:108px;top:40px;width:52px;height:22px"></i><i class="mi" style="left:108px;top:40px;width:20px;height:8px"></i><i class="rd" style="left:140px;top:40px;width:20px;height:8px"></i><i class="pu" style="left:108px;top:48px;width:52px;height:1px"></i></div>
<!-- r29 -->
<div class="c W"><i class="mi" style="left:0;top:9px;width:54px;height:34px"></i><i class="rd" style="left:81px;top:9px;width:53px;height:37px"></i><i class="pu" style="left:54px;top:9px;width:27px;height:1.5px"></i><i class="ph" style="left:1px;top:15px;width:12px;height:12px"></i><i class="ph" style="left:82px;top:15px;width:20px;height:14px"></i></div>
<div class="c W"><i class="mi" style="left:0;top:9px;width:54px;height:34px"></i><i class="rd" style="left:81px;top:9px;width:53px;height:37px"></i><i class="pu" style="left:54px;top:9px;width:27px;height:1.5px"></i><i class="ph" style="left:1px;top:15px;width:12px;height:12px"></i><i class="ph" style="left:82px;top:15px;width:20px;height:14px"></i></div>
<div class="c W"><i class="mi" style="left:0;top:9px;width:54px;height:34px"></i><i class="rd" style="left:81px;top:9px;width:53px;height:37px"></i><i class="pu" style="left:54px;top:9px;width:27px;height:1.5px"></i><i class="ph" style="left:1px;top:15px;width:12px;height:12px"></i><i class="ph" style="left:82px;top:15px;width:20px;height:14px"></i></div>
<div class="c W"><i class="mi" style="left:0;top:9px;width:54px;height:34px"></i><i class="rd" style="left:81px;top:9px;width:53px;height:37px"></i><i class="pu" style="left:54px;top:9px;width:27px;height:1.5px"></i><i class="ph" style="left:1px;top:15px;width:12px;height:12px"></i><i class="ph" style="left:82px;top:15px;width:20px;height:14px"></i></div>
<!-- r30 -->
<div class="c V"><i class="wh" style="left:96px;top:13px;width:22px;height:74px"></i><i class="mi" style="left:54px;top:13px;width:42px;height:74px"></i><i class="rd" style="left:118px;top:13px;width:42px;height:74px"></i><i class="pu" style="left:96px;top:13px;width:22px;height:4px"></i><i class="ph" style="left:55px;top:22px;width:22px;height:22px"></i><i class="ph" style="left:119px;top:25px;width:36px;height:22px"></i></div>
<div class="c V"><i class="wh" style="left:110px;top:12px;width:50px;height:75px"></i><i class="mi" style="left:110px;top:12px;width:22px;height:75px"></i><i class="rd" style="left:132px;top:12px;width:28px;height:75px"></i><i class="pu" style="left:131px;top:12px;width:8px;height:5px"></i><i class="ph" style="left:111px;top:22px;width:18px;height:18px"></i><i class="ph" style="left:133px;top:22px;width:25px;height:18px"></i></div>
<div class="c V"><i class="wh" style="left:110px;top:12px;width:50px;height:75px"></i><i class="mi" style="left:110px;top:12px;width:22px;height:75px"></i><i class="rd" style="left:132px;top:12px;width:28px;height:75px"></i><i class="pu" style="left:131px;top:12px;width:8px;height:5px"></i><i class="ph" style="left:111px;top:22px;width:18px;height:18px"></i><i class="ph" style="left:133px;top:22px;width:25px;height:18px"></i></div>
<div class="c W"><i class="mi" style="left:0;top:9px;width:64px;height:36px"></i><i class="rd" style="left:96px;top:9px;width:64px;height:39px"></i><i class="pu" style="left:0;top:48px;width:160px;height:1.5px"></i><i class="ph" style="left:1px;top:14px;width:14px;height:14px"></i><i class="ph" style="left:97px;top:14px;width:24px;height:14px"></i></div>
<!-- r31 -->
<div class="c V"><i class="wh" style="left:55px;top:22px;width:105px;height:55px"></i><i class="mi" style="left:55px;top:22px;width:40px;height:20px"></i><i class="rd" style="left:117px;top:22px;width:43px;height:20px"></i><i class="pu" style="left:55px;top:42px;width:105px;height:2px"></i><i class="ph" style="left:56px;top:25px;width:9px;height:10px"></i><i class="ph" style="left:118px;top:25px;width:14px;height:10px"></i></div>
<div class="c W"><i class="mi" style="left:0;top:9px;width:64px;height:36px"></i><i class="rd" style="left:96px;top:9px;width:64px;height:39px"></i><i class="pu" style="left:0;top:48px;width:160px;height:1.5px"></i><i class="ph" style="left:1px;top:14px;width:14px;height:14px"></i><i class="ph" style="left:97px;top:14px;width:24px;height:14px"></i></div>
<div class="c W"><i class="mi" style="left:0;top:9px;width:64px;height:36px"></i><i class="rd" style="left:96px;top:9px;width:64px;height:39px;background-color:#b890c8"></i><i class="pu" style="left:0;top:48px;width:160px;height:1.5px"></i><i class="ph" style="left:1px;top:14px;width:14px;height:14px"></i><i class="ph" style="left:97px;top:14px;width:24px;height:14px"></i></div>
<div class="c W"><i class="mi" style="left:0;top:9px;width:64px;height:36px"></i><i class="rd" style="left:96px;top:9px;width:64px;height:39px"></i><i class="pu" style="left:0;top:48px;width:160px;height:1.5px"></i><i class="ph" style="left:1px;top:14px;width:14px;height:14px"></i><i class="ph" style="left:97px;top:14px;width:24px;height:14px"></i></div>
<!-- r32 -->
<div class="c W"><i class="mi" style="left:0;top:9px;width:64px;height:36px"></i><i class="rd" style="left:96px;top:9px;width:64px;height:39px"></i><i class="pu" style="left:0;top:48px;width:160px;height:1.5px"></i><i class="ph" style="left:1px;top:14px;width:14px;height:14px"></i><i class="ph" style="left:97px;top:14px;width:24px;height:14px"></i></div>
<div class="c G"><i class="dr"></i><svg class="wv"><use href="#wp"/></svg><div class="win"><i class="bx" style="left:3px;top:7px;width:79px;height:6px">Header</i><i class="bx" style="left:3px;top:15px;width:16px;height:33px">Sidebar</i><i class="bx" style="left:21px;top:15px;width:61px;height:33px">Main content</i><i class="bx" style="left:3px;top:50px;width:79px;height:6px">Footer</i></div><i class="lg" style="left:127px;top:82px"></i><span class="gu">www.appbrewery.com</span></div>
<div class="c G"><i class="dr"></i><svg class="wv"><use href="#wp"/></svg><div class="win"><i class="bx" style="left:3px;top:7px;width:79px;height:6px">Header</i><i class="bx" style="left:3px;top:15px;width:16px;height:33px">Sidebar</i><i class="bx" style="left:21px;top:15px;width:61px;height:33px">Main content</i><i class="bx" style="left:3px;top:50px;width:79px;height:6px">Footer</i></div><i class="lg" style="left:127px;top:82px"></i><span class="gu">www.appbrewery.com</span></div>
<div class="c G"><i class="dr"></i><svg class="wv"><use href="#wp"/></svg><div class="win"><i class="bx" style="left:3px;top:7px;width:79px;height:6px">Header</i><i class="bx" style="left:3px;top:15px;width:16px;height:33px">Sidebar</i><i class="bx" style="left:21px;top:15px;width:61px;height:33px">Main content</i><i class="bx" style="left:3px;top:50px;width:79px;height:6px">Footer</i></div><i class="lg" style="left:127px;top:82px"></i><span class="gu">www.appbrewery.com</span></div>
<!-- r33 -->
<div class="c G"><i class="dr"></i><svg class="wv"><use href="#wp"/></svg><div class="win"><i class="bx" style="left:3px;top:7px;width:79px;height:6px">Header</i><i class="bx" style="left:3px;top:15px;width:16px;height:33px">Sidebar</i><i class="bx" style="left:21px;top:15px;width:61px;height:33px">Main content</i><i class="bx" style="left:3px;top:50px;width:79px;height:6px">Footer</i></div><i class="lg" style="left:127px;top:82px"></i><span class="gu">www.appbrewery.com</span></div>
<div class="c B"><i style="left:0;top:0;width:160px;height:4px;background:#3a2430"></i><i style="left:0;top:8px;width:160px;height:4px;background:#6f42c1"></i><i style="left:35px;top:14px;width:62px;height:58px;background:#4c4c52;border-radius:2px"></i><i style="left:38px;top:38px;width:10px;height:8px;background:#6a4cf0"></i><span class="bti">Get started with Bootstrap</span></div>
<div class="c G"><i class="dr"></i><svg class="wv"><use href="#wp"/></svg><div class="win"><i class="bx" style="left:3px;top:7px;width:79px;height:6px">Header</i><i class="bx" style="left:3px;top:15px;width:16px;height:33px">Sidebar</i><i class="bx" style="left:21px;top:15px;width:61px;height:33px">Main content</i><i class="bx" style="left:3px;top:50px;width:79px;height:6px">Footer</i></div><i class="lg" style="left:127px;top:82px"></i><span class="gu">www.appbrewery.com</span></div>
<div class="c G"><i class="dr"></i><svg class="wv"><use href="#wp"/></svg><div class="win"><i class="bx" style="left:3px;top:7px;width:79px;height:6px">Header</i><i class="bx" style="left:3px;top:15px;width:16px;height:33px">Sidebar</i><i class="bx" style="left:21px;top:15px;width:61px;height:33px">Main content</i><i class="bx" style="left:3px;top:50px;width:79px;height:6px">Footer</i></div><i class="lg" style="left:127px;top:82px"></i><span class="gu">www.appbrewery.com</span></div>
<!-- r34 -->
<div class="c G"><i class="dr"></i><svg class="wv"><use href="#wp"/></svg><div class="win"><i class="bx" style="left:3px;top:7px;width:79px;height:6px">Header</i><i class="bx" style="left:3px;top:15px;width:16px;height:33px">Sidebar</i><i class="bx" style="left:21px;top:15px;width:61px;height:33px">Main content</i><i class="bx" style="left:3px;top:50px;width:79px;height:6px">Footer</i></div><i class="lg" style="left:127px;top:82px"></i><span class="gu">www.appbrewery.com</span></div>
<div class="c G"><i class="dr"></i><svg class="wv"><use href="#wp"/></svg><div class="win"><i class="bx" style="left:3px;top:7px;width:79px;height:6px">Header</i><i class="bx" style="left:3px;top:15px;width:16px;height:33px">Sidebar</i><i class="bx" style="left:21px;top:15px;width:61px;height:33px">Main content</i><i class="bx" style="left:3px;top:50px;width:79px;height:6px">Footer</i></div><i class="lg" style="left:127px;top:82px"></i><span class="gu">www.appbrewery.com</span></div>
<div class="c G"><i class="dr"></i><svg class="wv"><use href="#wp"/></svg><div class="win"><i class="bx" style="left:3px;top:7px;width:79px;height:6px">Header</i><i class="bx" style="left:3px;top:15px;width:16px;height:33px">Sidebar</i><i class="bx" style="left:21px;top:15px;width:61px;height:33px">Main content</i><i class="bx" style="left:3px;top:50px;width:79px;height:6px">Footer</i></div><i class="lg" style="left:127px;top:82px"></i><span class="gu">www.appbrewery.com</span></div>
<div class="c G"><i class="dr"></i><svg class="wv"><use href="#wp"/></svg><div class="win"><i class="bx" style="left:3px;top:7px;width:79px;height:6px">Header</i><i class="bx" style="left:3px;top:15px;width:16px;height:33px">Sidebar</i><i class="bx" style="left:21px;top:15px;width:61px;height:33px">Main content</i><i class="bx" style="left:3px;top:50px;width:79px;height:6px">Footer</i></div><i class="lg" style="left:127px;top:82px"></i><span class="gu">www.appbrewery.com</span></div>
</div>
</body></html>
